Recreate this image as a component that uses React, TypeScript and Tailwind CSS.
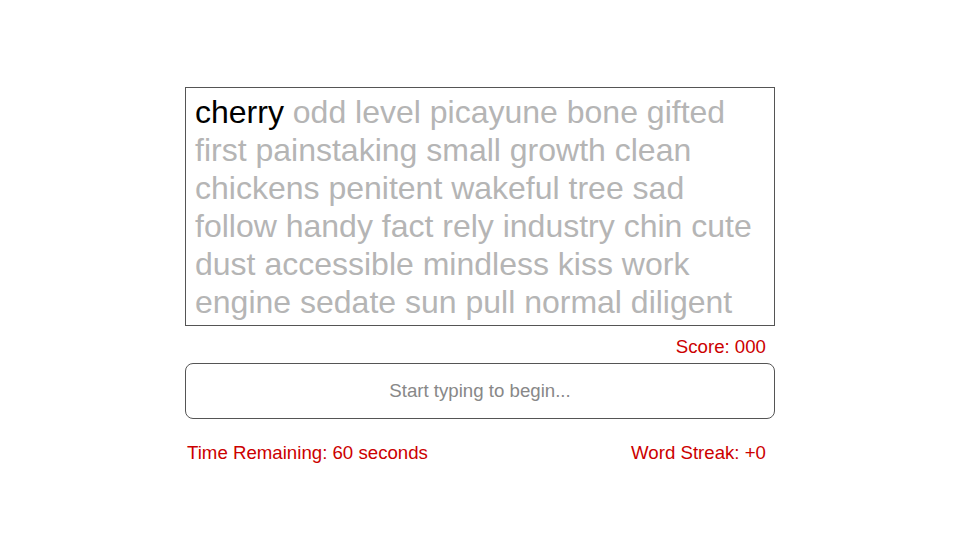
import React from "react";

const lines = [
  "odd level picayune bone gifted",
  "first painstaking small growth clean",
  "chickens penitent wakeful tree sad",
  "follow handy fact rely industry chin cute",
  "dust accessible mindless kiss work",
  "engine sedate sun pull normal diligent",
];

export default function App() {
  return (
    <div className="w-[960px] h-[540px] bg-white font-['Liberation_Sans',Arial,sans-serif]">
      <div className="w-[590px] mx-auto pt-[87px] flex flex-col">
        <div className="border border-[#555] h-[239px] px-[9px] pt-[5px] text-[32px] leading-[38px] text-[#b5b5b5] whitespace-nowrap">
          {lines.map((line, i) => (
            <div key={i}>
              {i === 0 && <span className="text-black">cherry </span>}
              {line}
            </div>
          ))}
        </div>
        <div className="flex justify-end pr-[9px] mt-[10px] text-[18.67px] leading-[22px] text-[#cc0000]">
          Score: 000
        </div>
        <div className="mt-[5px] h-[56px] border border-[#555] rounded-[8px] flex items-center justify-center text-[18.67px] text-[#888]">
          Start typing to begin...
        </div>
        <div className="flex justify-between pl-[2px] pr-[9px] mt-[23px] text-[18.67px] leading-[22px] text-[#cc0000]">
          <span>Time Remaining: 60 seconds</span>
          <span>Word Streak: +0</span>
        </div>
      </div>
    </div>
  );
}
